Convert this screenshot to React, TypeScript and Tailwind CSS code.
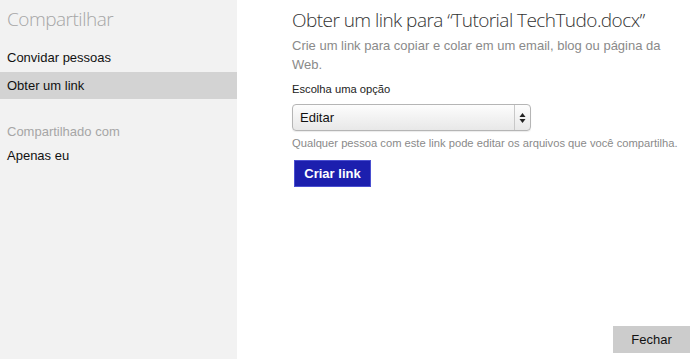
import React from 'react'

const BODY = { fontFamily: '"Liberation Sans", Arial, Helvetica, sans-serif' }
const LIGHT = { fontFamily: '"Open Sans", "Segoe UI", "Liberation Sans", sans-serif' }

function SelectArrows() {
  return (
    <svg width="7" height="12" viewBox="0 0 7 12" className="text-[#222]">
      <path d="M3.5 1 L6.5 5 L0.5 5 Z" fill="currentColor" />
      <path d="M3.5 11 L6.5 7 L0.5 7 Z" fill="currentColor" />
    </svg>
  )
}

export default function App() {
  return (
    <div className="flex w-[695px] h-[359px] bg-white overflow-hidden" style={BODY}>
      {/* Sidebar */}
      <div className="w-[237px] shrink-0 bg-[#f2f2f2] flex flex-col">
        <div className="pl-[7px] pt-[5px] h-[44px] text-[19px] font-light text-[#a6a6a6] tracking-[-0.5px]" style={LIGHT}>
          Compartilhar
        </div>
        <div className="h-[28px] flex items-center pl-[7px] text-[13px] text-[#111]">Convidar pessoas</div>
        <div className="h-[27px] flex items-center pl-[7px] text-[13px] text-[#111] bg-[#d3d3d3]">Obter um link</div>
        <div className="h-[22px]" />
        <div className="h-[22px] flex items-center pl-[7px] text-[13px] text-[#a6a6a6]">Compartilhado com</div>
        <div className="h-[26px] flex items-center pl-[7px] text-[13px] text-[#111]">Apenas eu</div>
      </div>

      {/* Content */}
      <div className="flex-1 min-w-0 flex flex-col pl-[55px] pr-[5px]">
        <div className="pt-[6px] h-[36px] text-[19px] font-light text-[#333] tracking-[-0.55px] whitespace-nowrap" style={LIGHT}>
          Obter um link para “Tutorial TechTudo.docx”
        </div>
        <div className="w-[380px] text-[13px] leading-[19px] text-[#8a8a8a]">
          Crie um link para copiar e colar em um email, blog ou página da Web.
        </div>
        <div className="mt-[7px] text-[11.2px] text-[#222] h-[18px]">Escolha uma opção</div>
        <div className="mt-[5px] w-[239px] h-[27px] rounded-[4px] border border-[#b5b5b5] bg-gradient-to-b from-[#fdfdfd] to-[#e8e8e8] flex items-center shadow-[0_1px_1px_rgba(0,0,0,0.08)]">
          <span className="flex-1 pl-[7px] text-[13px] text-[#111]">Editar</span>
          <div className="w-[16px] h-full border-l border-[#c8c8c8] flex items-center justify-center">
            <SelectArrows />
          </div>
        </div>
        <div className="mt-[4px] text-[11.2px] text-[#8a8a8a] whitespace-nowrap">
          Qualquer pessoa com este link pode editar os arquivos que você compartilha.
        </div>
        <div className="mt-[8px]">
          <button className="w-[77px] h-[27px] ml-[2px] bg-[#1c1fae] border border-[#4a4fd0] text-white text-[13px] font-bold">
            Criar link
          </button>
        </div>
        <div className="flex-1" />
        <div className="flex justify-end pb-[6px]">
          <button className="w-[77px] h-[27px] bg-[#cccccc] text-[#111] text-[13px]">Fechar</button>
        </div>
      </div>
    </div>
  )
}
